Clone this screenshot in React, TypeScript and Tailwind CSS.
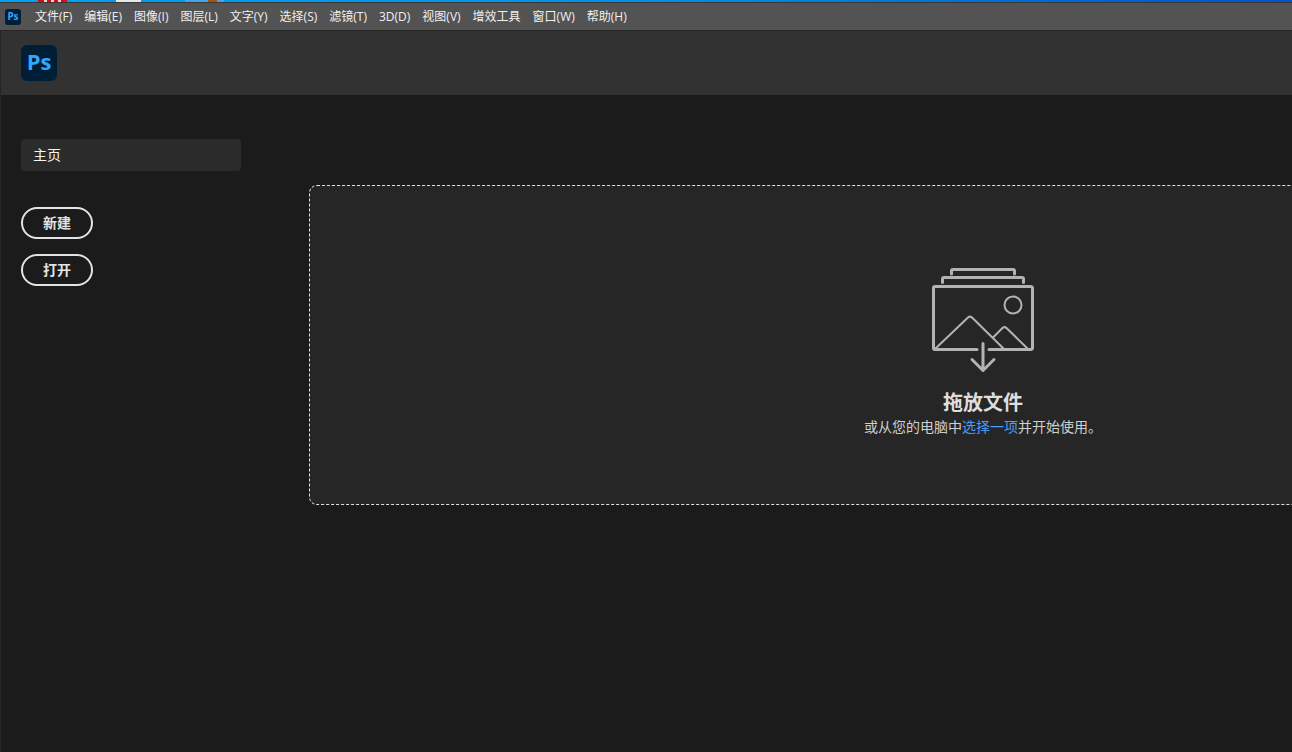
const menus = [
  '文件(F)',
  '编辑(E)',
  '图像(I)',
  '图层(L)',
  '文字(Y)',
  '选择(S)',
  '滤镜(T)',
  '3D(D)',
  '视图(V)',
  '增效工具',
  '窗口(W)',
  '帮助(H)'
]

const actions = ['新建', '打开']

// Sliver of the desktop that shows above the window
function DesktopEdge() {
  return (
    <div className="h-[2px] flex bg-linear-to-r from-[#00a2f3] via-[#0590ea] to-[#0553c6]">
      <div className="w-[29px] ml-[38px] flex justify-center gap-1 bg-[#d80c18]">
        <div className="w-[3px] bg-[#f8d0d2]" />
        <div className="w-[3px] bg-[#f8d0d2]" />
        <div className="w-[3px] bg-[#f8d0d2]" />
      </div>
      <div className="w-[25px] ml-[49px] bg-[#e8e8e8]" />
      <div className="w-[23px] ml-[44px] bg-[#4aa3e6]" />
      <div className="w-[9px] bg-[#a85510]" />
      <div className="w-[7px] bg-[#4aa3e6]" />
    </div>
  )
}

function MenuBar() {
  return (
    <nav className="h-7 flex items-center gap-[14px] pl-[5px] bg-[#535353] border-t border-[#383838]">
      <div className="size-4 rounded-[3px] bg-[#001e36] text-[#31a8ff] text-[10px] leading-[14px] font-bold text-center">
        Ps
      </div>
      <div className="flex gap-3 text-[12px] leading-4 text-[#f0f0f0] font-['Open_Sans','Noto_Sans_CJK_SC',sans-serif]">
        {menus.map((menu) => (
          <button key={menu} type="button" className="whitespace-nowrap">
            {menu}
          </button>
        ))}
      </div>
    </nav>
  )
}

function DropIcon() {
  return (
    <svg width="104" height="106" viewBox="0 0 104 106" fill="none" stroke="#b3b3b3" strokeLinecap="round" strokeLinejoin="round" aria-hidden="true">
      <g strokeWidth="3">
        <path d="M20.500 7V4a1.500 1.500 0 0 1 1.500-1.500h60a1.500 1.500 0 0 1 1.500 1.500v3" />
        <path d="M11.500 15.500V12a1.500 1.500 0 0 1 1.500-1.500h78a1.500 1.500 0 0 1 1.500 1.500v3.500" />
        <path d="M46 82.500H4a1.500 1.500 0 0 1-1.500-1.500V21a1.500 1.500 0 0 1 1.500-1.500h96a1.500 1.500 0 0 1 1.500 1.500v60a1.500 1.500 0 0 1-1.500 1.500H58" />
        <path d="M52 76.500v27M41 92.500l11 11 11-11" />
      </g>
      <g strokeWidth="2">
        <circle cx="82" cy="38" r="8.500" />
        <path d="M4 82l33-31.500q2-1.800 4 0L73 82" />
        <path d="M62 70.500l9.500-9.500q2-1.800 4 0L97 82" />
      </g>
    </svg>
  )
}

function DropZone() {
  return (
    <section className="grow min-w-[1348px] h-80 mt-[46px] pt-[81px] flex flex-col items-center rounded-lg border border-dashed border-[#e0e0e0] bg-[#262626]">
      <DropIcon />
      <h1 className="mt-4 text-[20px] leading-7 font-bold text-[#dedede]">拖放文件</h1>
      <p className="text-[14px] leading-5 text-[#cfcfcf]">
        或从您的电脑中
        <a href="#open" className="text-[#4b9cf5]">选择一项</a>
        并开始使用。
      </p>
    </section>
  )
}

export default function App() {
  return (
    <div className="min-h-screen flex flex-col overflow-hidden bg-[#1b1b1b] font-['Noto_Sans','Noto_Sans_CJK_SC',sans-serif]">
      <DesktopEdge />
      <MenuBar />
      <div className="grow flex flex-col border-l border-t border-[#262626]">
        <header className="h-16 flex items-center px-5 bg-[#323232]">
          <div className="size-9 rounded-md bg-[#001e36] text-[#31a8ff] text-[22px] leading-8 font-bold text-center font-['Open_Sans',sans-serif]">
            Ps
          </div>
        </header>
        <main className="flex items-start gap-[68px] px-5 pt-11">
          <aside className="w-[220px] shrink-0">
            <a href="#home" className="block h-8 px-3 rounded-sm bg-[#2b2b2b] text-[14px] leading-8 text-[#f5f5f5]">
              主页
            </a>
            <div className="mt-9 flex flex-col items-start gap-[15px]">
              {actions.map((action) => (
                <button
                  key={action}
                  type="button"
                  className="w-[72px] h-8 rounded-full border-2 border-[#e3e3e3] text-[14px] leading-7 font-bold text-[#e3e3e3]"
                >
                  {action}
                </button>
              ))}
            </div>
          </aside>
          <DropZone />
        </main>
      </div>
    </div>
  )
}
